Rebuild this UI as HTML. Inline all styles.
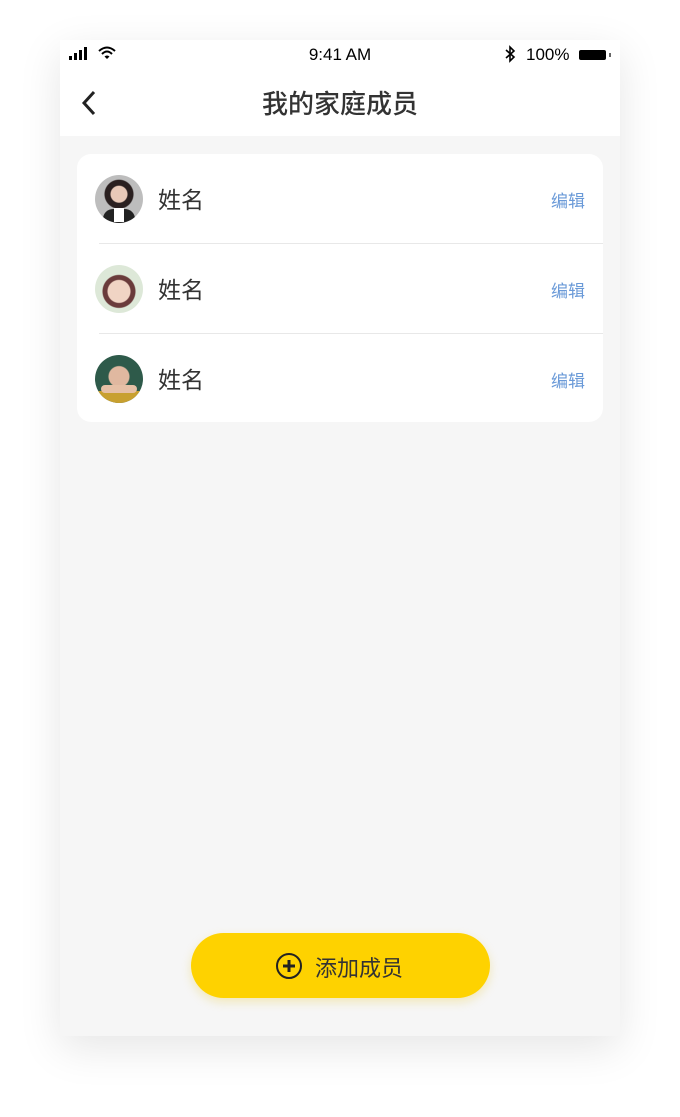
<!DOCTYPE html>
<html><head><meta charset="utf-8"><style>
body{margin:0;width:680px;height:1117px;background:#fff;font-family:"Liberation Sans","Noto Sans CJK SC",sans-serif;position:relative;overflow:hidden}
.phone{position:absolute;left:60px;top:40px;width:560px;height:996px;background:#f6f6f6;box-shadow:0 12px 40px rgba(0,0,0,0.10)}
.top{position:absolute;left:0;top:0;width:560px;height:96px;background:#fff}
.t{position:absolute;white-space:nowrap}
.card{position:absolute;left:17px;top:114px;width:526px;height:268px;background:#fff;border-radius:14px}
.row{position:absolute;left:0;width:526px;height:90px}
.av{position:absolute;left:18px;top:21px;width:48px;height:48px;border-radius:50%;overflow:hidden}
.nm{position:absolute;left:81px;top:27px;font-size:23px;color:#333}
.ed{position:absolute;right:18px;top:33px;font-size:17px;color:#6a9ad8}
.div{position:absolute;left:22px;right:0;height:1px;background:#e8e8e8}
.btn{position:absolute;left:131px;top:893px;width:299px;height:65px;border-radius:33px;background:#fed200;box-shadow:0 4px 10px rgba(230,190,0,0.25)}
</style></head><body>
<div class="phone">
<div class="top">
  <svg class="t" style="left:9px;top:7px" width="22" height="14"><rect x="0" y="9" width="3" height="4" fill="#000"/><rect x="5" y="6" width="3" height="7" fill="#000"/><rect x="10" y="3" width="3" height="10" fill="#000"/><rect x="15" y="0" width="3" height="13" fill="#000"/></svg>
  <svg class="t" style="left:38px;top:6px" width="18" height="14" viewBox="0 0 18 14"><path d="M1 5 Q9 -2 17 5" stroke="#000" stroke-width="2" fill="none"/><path d="M4 8 Q9 3 14 8" stroke="#000" stroke-width="2" fill="none"/><path d="M6.5 10.5 L9 13 L11.5 10.5 Q9 8.5 6.5 10.5Z" fill="#000"/></svg>
  <div class="t" style="left:0;width:560px;text-align:center;top:5px;font-size:17px;color:#000">9:41 AM</div>
  <svg class="t" style="left:444px;top:5px" width="12" height="18" viewBox="0 0 12 18"><path d="M2 5 L10 12 L6 16 L6 2 L10 6 L2 13" stroke="#000" stroke-width="1.6" fill="none"/></svg>
  <div class="t" style="left:466px;top:5px;font-size:17px;color:#000">100%</div>
  <div class="t" style="left:519px;top:10px;width:27px;height:10px;background:#000;border-radius:2px"></div>
  <div class="t" style="left:549px;top:13px;width:2px;height:4px;background:#666"></div>
  <svg class="t" style="left:20px;top:50px" width="20" height="26" viewBox="0 0 20 26"><path d="M14 2 L4 13 L14 24" stroke="#222" stroke-width="3" fill="none"/></svg>
  <div class="t" style="left:0;width:560px;text-align:center;top:44px;font-size:26px;font-weight:500;color:#333">我的家庭成员</div>
</div>
<div class="card">
  <div class="row" style="top:0">
    <div class="av" style="background:radial-gradient(circle at 50% 40%,#e8c9b8 0 8px,#2a2020 9px 14px,#bdbdbd 15px)"><div style="position:absolute;left:8px;top:34px;width:32px;height:20px;background:#222;border-radius:10px 10px 0 0"></div><div style="position:absolute;left:19px;top:33px;width:10px;height:14px;background:#fff"></div></div>
    <div class="nm">姓名</div><div class="ed">编辑</div>
  </div>
  <div class="div" style="top:89px"></div>
  <div class="row" style="top:90px">
    <div class="av" style="background:radial-gradient(circle at 50% 55%,#f0d4c4 0 11px,#6a3b3b 12px 16px,#dde8d8 17px)"></div>
    <div class="nm">姓名</div><div class="ed">编辑</div>
  </div>
  <div class="div" style="top:179px"></div>
  <div class="row" style="top:180px">
    <div class="av" style="background:radial-gradient(circle at 50% 45%,#e0b8a0 0 10px,#2e5a4a 11px)"><div style="position:absolute;left:0;top:36px;width:48px;height:12px;background:#c8a030"></div><div style="position:absolute;left:6px;top:30px;width:36px;height:8px;background:#e6c0a6;border-radius:4px"></div></div>
    <div class="nm">姓名</div><div class="ed">编辑</div>
  </div>
</div>
<div class="btn">
  <svg class="t" style="left:84px;top:19px" width="28" height="28" viewBox="0 0 28 28"><circle cx="14" cy="14" r="12" stroke="#222" stroke-width="2" fill="none"/><path d="M14 8 V20 M8 14 H20" stroke="#222" stroke-width="3"/></svg>
  <div class="t" style="left:124px;top:18px;font-size:22px;color:#333">添加成员</div>
</div>
</div>
</body></html>
